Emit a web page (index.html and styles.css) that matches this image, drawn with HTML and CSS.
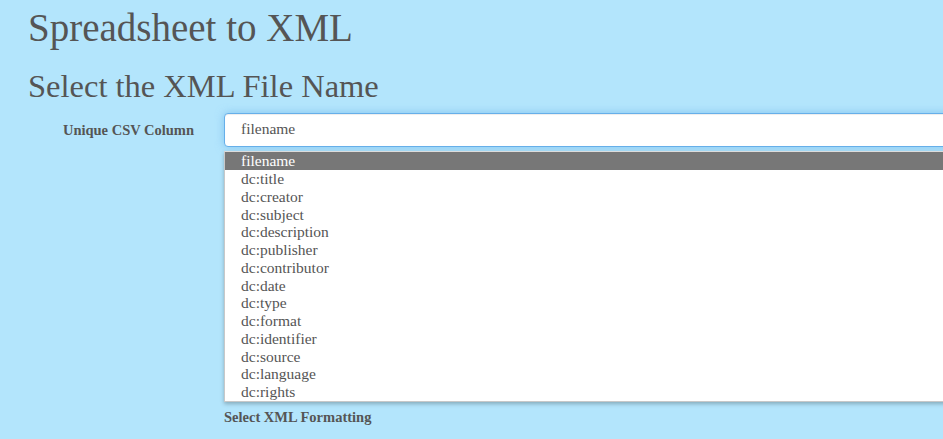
FILE: index.html
```html
<!DOCTYPE html>
<html>
<head>
<meta charset="utf-8">
<title>Spreadsheet to XML</title>
<link rel="stylesheet" href="styles.css">
</head>
<body>
<div class="page">
  <h1 class="title">Spreadsheet to XML</h1>
  <h2 class="subtitle">Select the XML File Name</h2>
  <div class="form-row">
    <label class="label">Unique CSV Column</label>
    <div class="field">
      <div class="input">filename</div>
      <ul class="list">
        <li class="option selected">filename</li>
        <li class="option">dc:title</li>
        <li class="option">dc:creator</li>
        <li class="option">dc:subject</li>
        <li class="option">dc:description</li>
        <li class="option">dc:publisher</li>
        <li class="option">dc:contributor</li>
        <li class="option">dc:date</li>
        <li class="option">dc:type</li>
        <li class="option">dc:format</li>
        <li class="option">dc:identifier</li>
        <li class="option">dc:source</li>
        <li class="option">dc:language</li>
        <li class="option">dc:rights</li>
      </ul>
      <div class="section-label">Select XML Formatting</div>
    </div>
  </div>
</div>
</body>
</html>
```
FILE: styles.css
```css
html, body {
  margin: 0;
  padding: 0;
  overflow: hidden;
}
body {
  background: #b3e5fc;
  color: #555555;
  font-family: Georgia, "Liberation Serif", serif;
  width: 943px;
  height: 439px;
}
.page {
  padding-left: 28px;
  width: 1160px;
}
.title {
  font-size: 39px;
  font-weight: normal;
  line-height: 44px;
  margin: 6px 0 0 0;
}
.subtitle {
  font-size: 32.5px;
  font-weight: normal;
  line-height: 36px;
  margin: 18px 0 0 0;
}
.form-row {
  display: flex;
  gap: 30px;
  margin-top: 9px;
}
.label {
  width: 166px;
  flex: none;
  text-align: right;
  font-weight: bold;
  font-size: 14.5px;
  padding-top: 7px;
  line-height: 20px;
}
.field {
  flex: 1;
}
.input {
  box-sizing: border-box;
  height: 34px;
  background: #fff;
  border: 1px solid #66afe9;
  border-radius: 4px;
  box-shadow: inset 0 1px 1px rgba(0,0,0,.075), 0 0 8px rgba(102,175,233,.6);
  padding: 5px 16px 7px;
  font-size: 15.5px;
  line-height: 20px;
  color: #555;
}
.list {
  list-style: none;
  margin: 4px 0 0 0;
  padding: 0;
  background: #fff;
  border: 1px solid #c8c8c8;
  border-top-color: #dcdcdc;
  box-shadow: 0 2px 4px rgba(0,0,0,.25);
}
.option {
  height: 17.75px;
  line-height: 17.75px;
  font-size: 15.5px;
  padding-left: 16px;
  color: #555;
}
.option.selected {
  height: 18px;
  background: #777777;
  color: #ffffff;
}
.section-label {
  font-weight: bold;
  font-size: 14.5px;
  margin-top: 5px;
  line-height: 20px;
}
```
